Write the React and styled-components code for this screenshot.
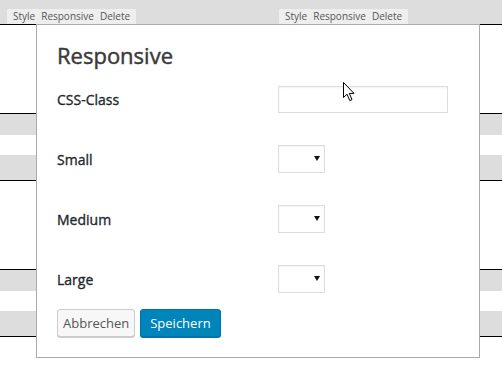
import React from "react";
import styled, { createGlobalStyle } from "styled-components";

const GlobalStyle = createGlobalStyle`
  html, body {
    margin: 0;
    padding: 0;
    background: #fff;
    font-family: "Open Sans", "Noto Sans", sans-serif;
  }
`;

const Page = styled.div`
  position: relative;
  width: 502px;
  height: 376px;
  overflow: hidden;
  background: #fff;
`;

const TopBar = styled.div`
  display: grid;
  grid-template-columns: 272px 1fr;
  height: 24px;
  background: #dddddd;
  border-bottom: 1px solid #000;
`;

const TabColumn = styled.div`
  display: flex;
  align-items: flex-end;
  padding-left: 7px;
`;

const TabStrip = styled.div`
  display: flex;
  height: 15px;
  padding: 0 3px;
  background: #eeeeee;
`;

const Tab = styled.span`
  padding: 0 3px;
  font-size: 10px;
  line-height: 15px;
  color: #555;
`;

const Spacer = styled.div`
  height: 88px;
`;

const Bands = styled.div`
  display: flex;
  flex-direction: column;
  border-top: 1px solid #000;
  border-bottom: 1px solid #000;
`;

const Band = styled.div`
  height: ${(p) => p.h}px;
  background: ${(p) => (p.gray ? "#dddddd" : "#fff")};
`;

const Modal = styled.div`
  position: absolute;
  left: 36px;
  top: 24px;
  width: 444px;
  height: 334px;
  box-sizing: border-box;
  border: 1px solid #aaa;
  background: #fff;
  padding: 16px 20px 0;
`;

const Title = styled.h2`
  margin: 0 0 17px;
  font-size: 22px;
  line-height: 28px;
  font-weight: 400;
  -webkit-text-stroke: 0.45px currentColor;
  color: #3a3a3a;
`;

const Form = styled.div`
  display: grid;
  grid-template-columns: 221px auto;
  row-gap: 32px;
  align-items: center;
`;

const Label = styled.label`
  font-size: 14px;
  font-weight: 400;
  -webkit-text-stroke: 0.35px currentColor;
  color: #23282d;
`;

const TextInput = styled.input`
  width: 170px;
  height: 27px;
  box-sizing: border-box;
  border: 1px solid #ddd;
  box-shadow: inset 0 1px 2px rgba(0, 0, 0, 0.05);
  outline: none;
  margin: 0;
`;

const SelectWrap = styled.div`
  position: relative;
  width: 47px;
  height: 28px;
  &::after {
    content: "";
    position: absolute;
    left: 36px;
    top: 11px;
    border-left: 3px solid transparent;
    border-right: 3px solid transparent;
    border-top: 5px solid #111;
    pointer-events: none;
  }
`;

const Select = styled.select`
  appearance: none;
  width: 100%;
  height: 100%;
  box-sizing: border-box;
  border: 1px solid #ddd;
  border-radius: 0;
  background: #fff;
  box-shadow: inset 0 1px 2px rgba(0, 0, 0, 0.05);
  margin: 0;
`;

const Buttons = styled.div`
  display: flex;
  gap: 5px;
  margin-top: 16px;
`;

const Button = styled.button`
  height: 28px;
  padding: 0 ${(p) => (p.primary ? 9 : 5)}px;
  border-radius: 3px;
  font-family: "Open Sans", sans-serif;
  font-size: 13px;
  line-height: 26px;
  cursor: pointer;
  border: 1px solid ${(p) => (p.primary ? "#0073aa" : "#ccc")};
  background: ${(p) => (p.primary ? "#0085ba" : "#f7f7f7")};
  color: ${(p) => (p.primary ? "#fff" : "#555")};
  box-shadow: 0 1px 0 ${(p) => (p.primary ? "#0073aa" : "#ccc")};
`;

const Cursor = styled.svg`
  position: absolute;
  left: 343px;
  top: 82px;
`;

const tabs = ["Style", "Responsive", "Delete"];

const TabGroup = () => (
  <TabColumn>
    <TabStrip>
      {tabs.map((t) => (
        <Tab key={t}>{t}</Tab>
      ))}
    </TabStrip>
  </TabColumn>
);

const RowGroup = () => (
  <>
    <Spacer />
    <Bands>
      <Band gray h={21} />
      <Band h={20} />
      <Band gray h={25} />
    </Bands>
  </>
);

const SizeSelect = () => (
  <SelectWrap>
    <Select defaultValue="">
      <option value=""></option>
    </Select>
  </SelectWrap>
);

export default function App() {
  return (
    <Page>
      <GlobalStyle />
      <TopBar>
        <TabGroup />
        <TabGroup />
      </TopBar>
      <RowGroup />
      <RowGroup />

      <Modal>
        <Title>Responsive</Title>
        <Form>
          <Label>CSS-Class</Label>
          <TextInput type="text" />
          <Label>Small</Label>
          <SizeSelect />
          <Label>Medium</Label>
          <SizeSelect />
          <Label>Large</Label>
          <SizeSelect />
        </Form>
        <Buttons>
          <Button>Abbrechen</Button>
          <Button primary>Speichern</Button>
        </Buttons>
      </Modal>

      <Cursor width="13" height="20" viewBox="0 0 13 20">
        <path
          d="M0.5 0.5 L0.5 15.5 L4 12.2 L6.8 18.6 L9 17.6 L6.3 11.4 L11 11.4 Z"
          fill="#fff"
          stroke="#000"
          strokeWidth="1"
        />
      </Cursor>
    </Page>
  );
}
